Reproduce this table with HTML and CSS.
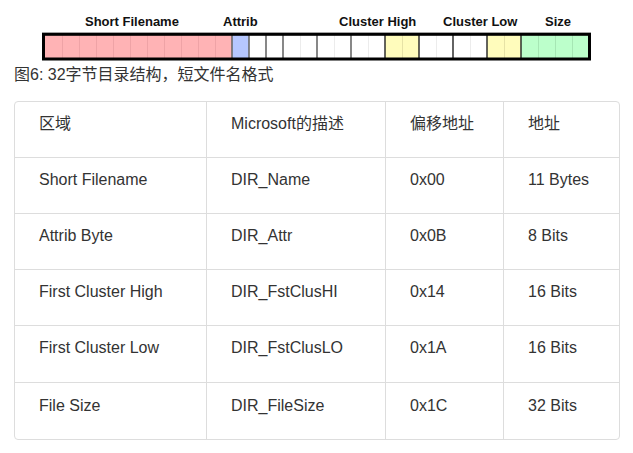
FILE: index.html
```html
<!DOCTYPE html>
<html lang="zh">
<head>
<meta charset="utf-8">
<title>32字节目录结构</title>
<link rel="stylesheet" href="styles.css">
</head>
<body>
<figure class="figure">
  <svg class="diagram" width="633" height="62" viewBox="0 0 633 62" xmlns="http://www.w3.org/2000/svg">
    <g class="labels" font-family="'Liberation Sans', Arial, sans-serif" font-weight="bold" font-size="13" fill="#111">
      <text x="85" y="26">Short Filename</text>
      <text x="223" y="26">Attrib</text>
      <text x="339" y="26">Cluster High</text>
      <text x="443" y="26">Cluster Low</text>
      <text x="545" y="26">Size</text>
    </g>
    <line x1="42" y1="32.5" x2="591" y2="32.5" stroke="#cfcfcf" stroke-width="1"/>
    <!-- fields -->
    <rect x="45" y="35" width="187" height="23" fill="#ffb3b5"/>
    <rect x="232" y="35" width="17" height="23" fill="#b6c7ff"/>
    <rect x="249" y="35" width="136" height="23" fill="#ffffff"/>
    <rect x="385" y="35" width="34" height="23" fill="#fffcbc"/>
    <rect x="419" y="35" width="68" height="23" fill="#ffffff"/>
    <rect x="487" y="35" width="34" height="23" fill="#fffcbc"/>
    <rect x="521" y="35" width="67" height="23" fill="#bcffcb"/>
    <!-- faint byte dividers -->
    <g stroke="#efa3a6" stroke-width="1">
      <line x1="62.5" y1="35" x2="62.5" y2="58"/>
      <line x1="79.5" y1="35" x2="79.5" y2="58"/>
      <line x1="96.5" y1="35" x2="96.5" y2="58"/>
      <line x1="113.5" y1="35" x2="113.5" y2="58"/>
      <line x1="130.5" y1="35" x2="130.5" y2="58"/>
      <line x1="147.5" y1="35" x2="147.5" y2="58"/>
      <line x1="164.5" y1="35" x2="164.5" y2="58"/>
      <line x1="181.5" y1="35" x2="181.5" y2="58"/>
      <line x1="198.5" y1="35" x2="198.5" y2="58"/>
      <line x1="215.5" y1="35" x2="215.5" y2="58"/>
    </g>
    <g stroke="#ececec" stroke-width="1">
      <line x1="300.5" y1="35" x2="300.5" y2="58"/>
      <line x1="334.5" y1="35" x2="334.5" y2="58"/>
      <line x1="368.5" y1="35" x2="368.5" y2="58"/>
      <line x1="436.5" y1="35" x2="436.5" y2="58"/>
      <line x1="470.5" y1="35" x2="470.5" y2="58"/>
    </g>
    <g stroke="#e6e2a6" stroke-width="1">
      <line x1="402.5" y1="35" x2="402.5" y2="58"/>
      <line x1="504.5" y1="35" x2="504.5" y2="58"/>
    </g>
    <g stroke="#a6e6b4" stroke-width="1">
      <line x1="538.5" y1="35" x2="538.5" y2="58"/>
      <line x1="555.5" y1="35" x2="555.5" y2="58"/>
      <line x1="572.5" y1="35" x2="572.5" y2="58"/>
    </g>
    <!-- field dividers -->
    <g stroke="#6a6a6a" stroke-width="1.6">
      <line x1="232" y1="35" x2="232" y2="58"/>
      <line x1="249" y1="35" x2="249" y2="58"/>
      <line x1="266" y1="35" x2="266" y2="58"/>
      <line x1="283" y1="35" x2="283" y2="58"/>
      <line x1="317" y1="35" x2="317" y2="58"/>
      <line x1="351" y1="35" x2="351" y2="58"/>
    </g>
    <g stroke="#222" stroke-width="1.4">
      <line x1="385" y1="35" x2="385" y2="58"/>
      <line x1="419" y1="35" x2="419" y2="58"/>
      <line x1="453" y1="35" x2="453" y2="58"/>
      <line x1="487" y1="35" x2="487" y2="58"/>
      <line x1="521" y1="35" x2="521" y2="58"/>
    </g>
    <rect x="43.5" y="34.3" width="546" height="24.7" fill="none" stroke="#000" stroke-width="3"/>
  </svg>
  <figcaption class="caption">图6: 32字节目录结构，短文件名格式</figcaption>
</figure>

<table class="dir-table">
  <colgroup>
    <col class="c1"><col class="c2"><col class="c3"><col class="c4">
  </colgroup>
  <tr><td>区域</td><td>Microsoft的描述</td><td>偏移地址</td><td>地址</td></tr>
  <tr><td>Short Filename</td><td>DIR_Name</td><td>0x00</td><td>11 Bytes</td></tr>
  <tr><td>Attrib Byte</td><td>DIR_Attr</td><td>0x0B</td><td>8 Bits</td></tr>
  <tr><td>First Cluster High</td><td>DIR_FstClusHI</td><td>0x14</td><td>16 Bits</td></tr>
  <tr class="tall"><td>First Cluster Low</td><td>DIR_FstClusLO</td><td>0x1A</td><td>16 Bits</td></tr>
  <tr class="last"><td>File Size</td><td>DIR_FileSize</td><td>0x1C</td><td>32 Bits</td></tr>
</table>
</body>
</html>
```

FILE: styles.css
```css
html, body {
  margin: 0;
  padding: 0;
  background: #ffffff;
}

body {
  font-family: "Liberation Sans", Arial, "Noto Sans CJK SC", sans-serif;
  color: #333333;
  font-size: 16px;
}

.figure {
  margin: 0;
}

.diagram {
  display: block;
}

.caption {
  margin: 1px 0 0 14px;
  line-height: 24px;
  font-size: 16px;
  color: #333333;
}

.dir-table {
  margin: 14px 0 0 14px;
  width: 606px;
  border: 1px solid #dddddd;
  border-radius: 4px;
  border-collapse: separate;
  border-spacing: 0;
  table-layout: fixed;
}

.c1 { width: 192px; }
.c2 { width: 179px; }
.c3 { width: 118px; }
.c4 { width: 115px; }

.dir-table td {
  padding: 11px 10px 22px 24px;
  line-height: 22px;
  height: 22px;
  vertical-align: top;
  border-right: 1px solid #dddddd;
  border-bottom: 1px solid #dddddd;
  white-space: nowrap;
}

.dir-table td:last-child {
  border-right: none;
}

.dir-table .tall td {
  padding-bottom: 23px;
}

.dir-table .last td {
  border-bottom: none;
  padding-top: 12px;
  padding-bottom: 22px;
}
```
